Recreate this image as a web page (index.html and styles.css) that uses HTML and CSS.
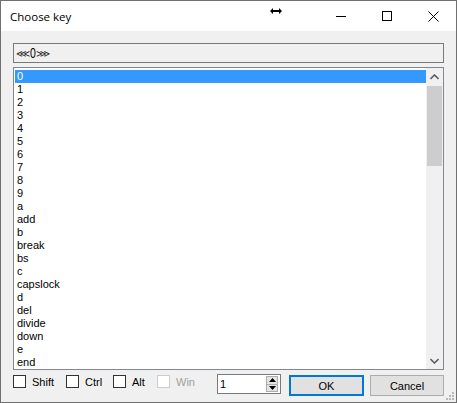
FILE: index.html
```html
<!DOCTYPE html>
<html>
<head>
<meta charset="utf-8">
<link rel="stylesheet" href="styles.css">
</head>
<body>
<div class="window">
  <div class="titlebar">
    <span class="title">Choose key</span>
    <svg class="resize-icon" width="12" height="6" viewBox="0 0 12 6"><path d="M0 3 L3 0 L3 2 L9 2 L9 0 L12 3 L9 6 L9 4 L3 4 L3 6 Z" fill="#000"/></svg>
    <div class="caption-buttons">
      <div class="cbtn"><svg width="10" height="10" viewBox="0 0 10 10"><path d="M0 5.5 H10" stroke="#000" stroke-width="1"/></svg></div>
      <div class="cbtn"><svg width="10" height="10" viewBox="0 0 10 10"><rect x="0.5" y="0.5" width="9" height="9" fill="none" stroke="#000" stroke-width="1"/></svg></div>
      <div class="cbtn"><svg width="11" height="11" viewBox="0 0 11 11"><path d="M0.5 0.5 L10.5 10.5 M10.5 0.5 L0.5 10.5" stroke="#000" stroke-width="1"/></svg></div>
    </div>
  </div>
  <div class="content">
    <div class="keybox"><span class="chev">⋘</span><span class="zero">0</span><span class="chev">⋙</span></div>
    <div class="listbox">
      <div class="items">
        <div class="item selected">0</div>
        <div class="item">1</div>
        <div class="item">2</div>
        <div class="item">3</div>
        <div class="item">4</div>
        <div class="item">5</div>
        <div class="item">6</div>
        <div class="item">7</div>
        <div class="item">8</div>
        <div class="item">9</div>
        <div class="item">a</div>
        <div class="item">add</div>
        <div class="item">b</div>
        <div class="item">break</div>
        <div class="item">bs</div>
        <div class="item">c</div>
        <div class="item">capslock</div>
        <div class="item">d</div>
        <div class="item">del</div>
        <div class="item">divide</div>
        <div class="item">down</div>
        <div class="item">e</div>
        <div class="item">end</div>
      </div>
      <div class="scrollbar">
        <div class="sb-btn"><svg width="9" height="6" viewBox="0 0 9 6"><path d="M0.5 5 L4.5 1 L8.5 5" fill="none" stroke="#606060" stroke-width="1.6"/></svg></div>
        <div class="sb-track"><div class="sb-thumb"></div></div>
        <div class="sb-btn"><svg width="9" height="6" viewBox="0 0 9 6"><path d="M0.5 1 L4.5 5 L8.5 1" fill="none" stroke="#606060" stroke-width="1.6"/></svg></div>
      </div>
    </div>
    <div class="bottom">
      <label class="chk w-shift"><span class="box"></span>Shift</label>
      <label class="chk w-ctrl"><span class="box"></span>Ctrl</label>
      <label class="chk w-alt"><span class="box"></span>Alt</label>
      <label class="chk w-win disabled"><span class="box"></span>Win</label>
      <div class="numeric">
        <span class="num-val">1</span>
        <div class="spin">
          <div class="spin-btn"><svg width="7" height="4" viewBox="0 0 7 4"><path d="M0 4 L3.5 0 L7 4 Z" fill="#000"/></svg></div>
          <div class="spin-btn"><svg width="7" height="4" viewBox="0 0 7 4"><path d="M0 0 L3.5 4 L7 0 Z" fill="#000"/></svg></div>
        </div>
      </div>
      <div class="btn default">OK</div>
      <div class="btn">Cancel</div>
    </div>
  </div>
  <svg class="grip" width="8" height="8" viewBox="0 0 8 8">
    <rect x="6" y="0" width="2" height="2" fill="#b8b8b8"/>
    <rect x="3" y="3" width="2" height="2" fill="#b8b8b8"/>
    <rect x="6" y="3" width="2" height="2" fill="#b8b8b8"/>
    <rect x="0" y="6" width="2" height="2" fill="#b8b8b8"/>
    <rect x="3" y="6" width="2" height="2" fill="#b8b8b8"/>
    <rect x="6" y="6" width="2" height="2" fill="#b8b8b8"/>
  </svg>
</div>
</body>
</html>
```

FILE: styles.css
```css
* { box-sizing: border-box; }
html, body { margin: 0; padding: 0; background: #fff; }
body { font-family: "Liberation Sans", Arial, sans-serif; font-size: 11px; color: #000; }

.window {
  position: relative;
  width: 457px;
  height: 403px;
  border: 1px solid #707070;
  background: #f0f0f0;
  display: flex;
  flex-direction: column;
}

.titlebar {
  height: 30px;
  background: #fff;
  display: flex;
  align-items: center;
  position: relative;
}
.title {
  font-family: "Open Sans", "Noto Sans", sans-serif;
  font-size: 11.5px;
  margin-left: 9px;
  margin-top: 1px;
}
.resize-icon {
  position: absolute;
  left: 269px;
  top: 7px;
}
.caption-buttons {
  margin-left: auto;
  display: flex;
  height: 30px;
}
.cbtn {
  width: 46px;
  height: 30px;
  display: flex;
  align-items: center;
  justify-content: center;
}

.content {
  flex: 1;
  padding: 12px 12px 0 12px;
  display: flex;
  flex-direction: column;
}

.keybox {
  height: 20px;
  border: 1px solid #7a7a7a;
  background: #f0f0f0;
  display: flex;
  align-items: center;
  padding-left: 2px;
  font-family: "DejaVu Sans", sans-serif;
}
.chev { font-size: 10px; color: #222; }
.zero {
  font-family: "Liberation Sans", sans-serif;
  font-size: 14px;
  display: inline-block;
  transform: scaleX(0.75);
  margin: 0 -1px;
}

.listbox {
  margin-top: 4px;
  height: 303px;
  border: 1px solid #828790;
  background: #fff;
  display: flex;
  padding: 1px 0 1px 1px;
  overflow: hidden;
}
.items {
  flex: 1;
  overflow: hidden;
  padding-top: 1px;
}
.item {
  height: 13px;
  line-height: 13px;
  padding-left: 2px;
  white-space: nowrap;
}
.item.selected {
  background: #3399ff;
  color: #fff;
}

.scrollbar {
  width: 17px;
  display: flex;
  flex-direction: column;
  background: #f0f0f0;
  margin-top: -1px;
  margin-bottom: -1px;
}
.sb-btn {
  height: 17px;
  display: flex;
  align-items: center;
  justify-content: center;
}
.sb-track {
  flex: 1;
  padding: 1px 1px;
}
.sb-thumb {
  height: 80px;
  background: #cdcdcd;
}

.bottom {
  margin-top: 4px;
  height: 22px;
  display: flex;
  align-items: flex-start;
}
.chk {
  display: flex;
  align-items: center;
  height: 13px;
  margin-top: 1px;
}
.box {
  width: 13px;
  height: 13px;
  border: 1px solid #333;
  background: #fff;
  margin-right: 6px;
}
.w-shift { width: 53px; }
.w-ctrl { width: 47px; }
.w-alt { width: 44px; }
.w-win { width: 60px; }
.chk.disabled { color: #a0a0a0; }
.chk.disabled .box { border-color: #cccccc; }

.numeric {
  width: 64px;
  height: 20px;
  border: 1px solid #7a7a7a;
  background: #fff;
  display: flex;
  align-items: center;
  padding-left: 2px;
  padding-right: 2px;
}
.num-val { flex: 1; font-size: 11px; }
.spin {
  width: 12px;
  height: 16px;
  display: flex;
  flex-direction: column;
  border: 1px solid #acacac;
  background: #e5e5e5;
}
.spin-btn {
  flex: 1;
  display: flex;
  align-items: center;
  justify-content: center;
}
.spin-btn + .spin-btn { border-top: 1px solid #acacac; }

.btn {
  height: 21px;
  width: 74px;
  margin-top: 1px;
  border: 1px solid #adadad;
  background: #e1e1e1;
  display: flex;
  align-items: center;
  justify-content: center;
  margin-left: 6px;
}
.btn.default {
  width: 75px;
  margin-left: 8px;
  border: 2px solid #0078d7;
}

.grip {
  position: absolute;
  right: 2px;
  bottom: 2px;
}
```
